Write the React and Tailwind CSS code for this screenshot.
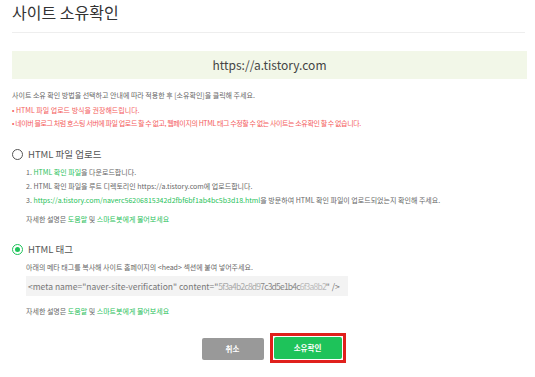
export default function App() {
  const font = { fontFamily: '"Noto Sans CJK KR", "Noto Sans", sans-serif' };
  return (
    <div className="w-[535px] h-[377px] bg-white overflow-hidden text-[#666]" style={font}>
      <div className="pl-[12px] pr-[8px]">
        <div className="h-[32px] flex items-center text-[16px] text-[#333] leading-none pb-[9px]">사이트 소유확인</div>
        <div className="h-px bg-[#eeeeee] mr-[2px]"></div>
        <div className="mt-[18px] h-[28px] bg-[#f2f7e8] flex items-center justify-center text-[12px] text-[#444]">https://a.tistory.com</div>
        <div className="mt-[10px] h-[13px] flex items-center text-[7px] text-[#666] whitespace-nowrap">사이트 소유 확인 방법을 선택하고 안내에 따라 적용한 후 [소유확인]을 클릭해 주세요.</div>
        <div className="mt-[2px] h-[13px] flex items-center text-[7px] text-[#f45c5c] whitespace-nowrap">• HTML 파일 업로드 방식을 권장해드립니다.</div>
        <div className="h-[13px] flex items-center text-[7px] text-[#f45c5c] whitespace-nowrap tracking-[-0.4px]">• 네이버 블로그 처럼 호스팅 서버에 파일 업로드 할 수 없고, 웹페이지의 HTML 태그 수정할 수 없는 사이트는 소유확인 할 수 없습니다.</div>

        <div className="mt-[17px] h-[14px] flex items-center gap-[5px]">
          <span className="w-[11px] h-[11px] rounded-full border border-[#555]"></span>
          <span className="text-[9.5px] text-[#555]">HTML 파일 업로드</span>
        </div>
        <div className="pl-[14px] text-[7px] text-[#666] whitespace-nowrap">
          <div className="mt-[5px] h-[13px] flex items-center">1.&nbsp;<span className="text-[#1fbf5a]">HTML 확인 파일</span>을 다운로드합니다.</div>
          <div className="mt-[1px] h-[13px] flex items-center">2. HTML 확인 파일을 루트 디렉토리인 https://a.tistory.com에 업로드합니다.</div>
          <div className="mt-[1px] h-[13px] flex items-center">3.&nbsp;<span className="text-[#1fbf5a]">https://a.tistory.com/naverc56206815342d2fbf6bf1ab4bc5b3d18.html</span>을 방문하여 HTML 확인 파일이 업로드되었는지 확인해 주세요.</div>
          <div className="mt-[6px] h-[13px] flex items-center">자세한 설명은&nbsp;<span className="text-[#1fbf5a]">도움말</span>&nbsp;및&nbsp;<span className="text-[#1fbf5a]">스마트봇에게 물어보세요</span></div>
        </div>

        <div className="mt-[16px] h-[14px] flex items-center gap-[5px]">
          <span className="w-[11px] h-[11px] rounded-full border-[1.5px] border-[#1ec35a] flex items-center justify-center">
            <span className="w-[5px] h-[5px] rounded-full bg-[#1ec35a]"></span>
          </span>
          <span className="text-[9.5px] text-[#555]">HTML 태그</span>
        </div>
        <div className="pl-[14px] text-[7px] text-[#666] whitespace-nowrap">
          <div className="mt-[5px] h-[13px] flex items-center">아래의 메타 태그를 복사해 사이트 홈페이지의 &lt;head&gt; 섹션에 붙여 넣어주세요.</div>
          <div className="mt-[2px] h-[20px] w-[322px] bg-[#f3f3f3] flex items-center px-[2px] text-[8.5px] text-[#777]">
            <span>&lt;meta name="naver-site-verification" content="</span>
            <span className="text-[#aaa] tracking-[-0.8px]">5f3a4b2c8d9</span>
            <span className="text-[#888] tracking-[-0.8px]">7c3d5e1b4c</span>
            <span className="text-[#bbb] tracking-[-0.8px]">6f3a8b2</span>
            <span>" /&gt;</span>
          </div>
          <div className="mt-[9px] h-[13px] flex items-center">자세한 설명은&nbsp;<span className="text-[#1fbf5a]">도움말</span>&nbsp;및&nbsp;<span className="text-[#1fbf5a]">스마트봇에게 물어보세요</span></div>
        </div>

        <div className="mt-[15px] flex justify-center gap-[6px] pl-[8px]">
          <div className="mt-[5px] w-[62px] h-[22px] bg-[#999] rounded-[2px] flex items-center justify-center text-white text-[7.5px] font-bold">취소</div>
          <div className="border-[3px] border-[#e0201c] p-[1px]">
            <div className="w-[68px] h-[22px] bg-[#1ec35a] rounded-[2px] flex items-center justify-center text-white text-[7.5px] font-bold">소유확인</div>
          </div>
        </div>
      </div>
    </div>
  );
}
